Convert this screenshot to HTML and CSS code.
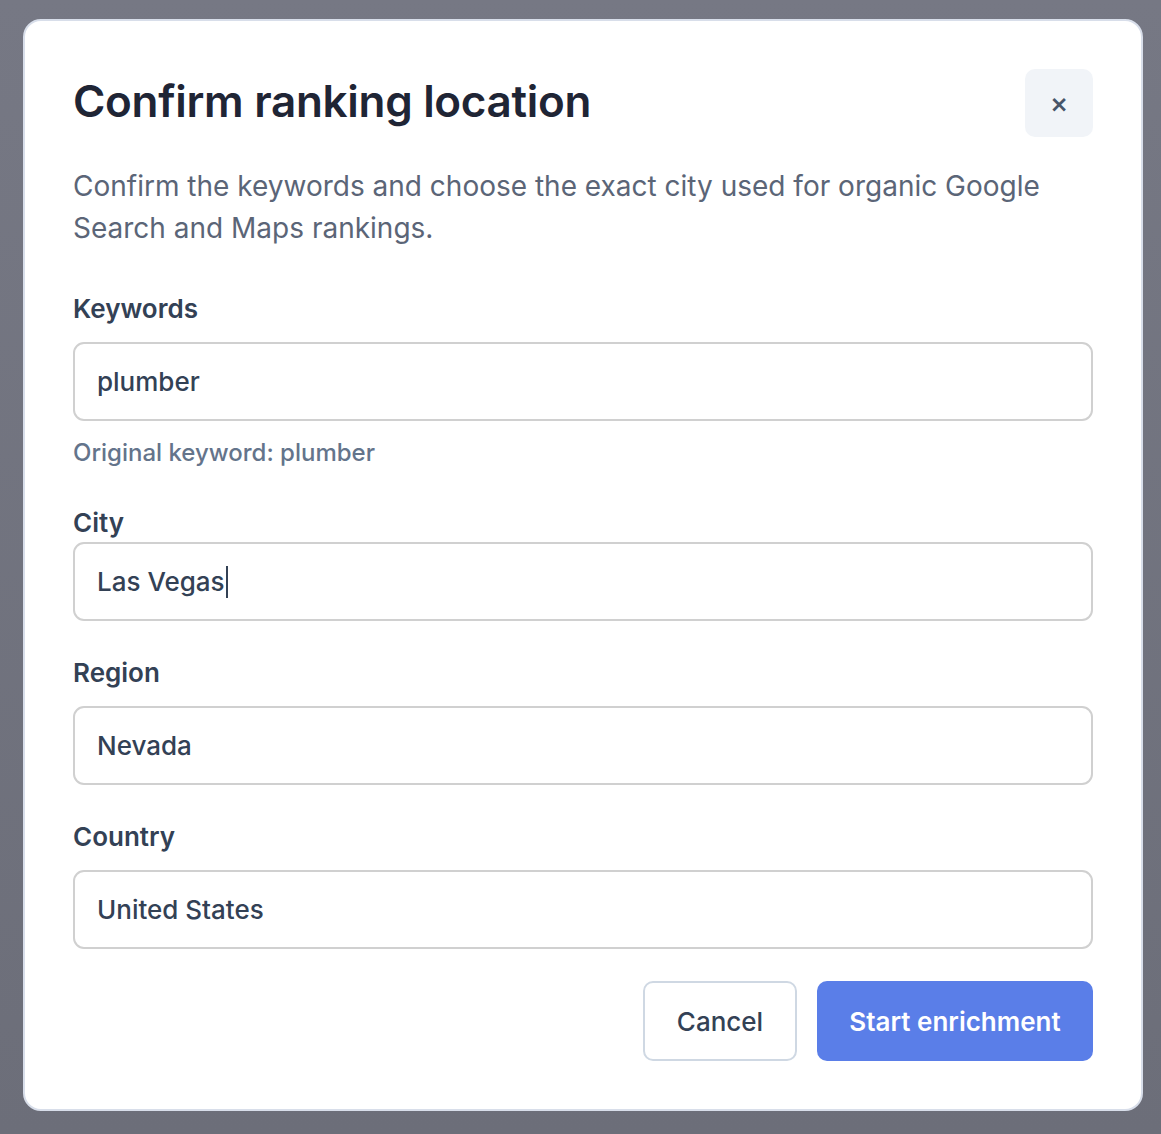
FILE: index.html
```html
<!DOCTYPE html>
<html lang="en">
<head>
  <meta charset="UTF-8" />
  <meta name="viewport" content="width=device-width, initial-scale=1.0"/>
  <title>Confirm ranking location</title>
  <link rel="stylesheet" href="styles.css">
</head>
<body>

  <div class="overlay">
    <div class="modal" role="dialog" aria-labelledby="modalTitle">
      <div class="modal-header">
        <h2 id="modalTitle">Confirm ranking location</h2>
        <button class="btn-close" type="button" aria-label="Close">&times;</button>
      </div>

      <p class="modal-text">
        Confirm the keywords and choose the exact city used for organic Google
        Search and Maps rankings.
      </p>

      <form class="fields">
        <!-- Keywords -->
        <div class="field field-keywords">
          <label for="keywords">Keywords</label>
          <input id="keywords" type="text" value="plumber" />
          <div class="hint">Original keyword: plumber</div>
        </div>

        <!-- City (autocomplete) -->
        <div class="field field-city">
          <label for="city">City</label>
          <div class="input-fake"><span>Las Vegas</span><span class="caret"></span></div>
        </div>

        <!-- Region -->
        <div class="field">
          <label for="region">Region</label>
          <input id="region" type="text" value="Nevada" />
        </div>

        <!-- Country -->
        <div class="field">
          <label for="country">Country</label>
          <input id="country" type="text" value="United States" />
        </div>

        <div class="actions">
          <button type="button" class="btn btn-cancel">Cancel</button>
          <button type="button" class="btn btn-primary">Start enrichment</button>
        </div>
      </form>
    </div>
  </div>

</body>
</html>
```

FILE: styles.css
```css
:root {
  --title: #1f2535;
  --text: #334155;
  --muted: #64748b;
  --line: #d0d0d0;
  --primary: #5a7ee8;
  --font-main: 'Inter', 'Noto Sans', sans-serif;
}

* {
  margin: 0;
  padding: 0;
  box-sizing: border-box;
}

body {
  font-family: var(--font-main);
  background: linear-gradient(to bottom, #767884, #6c6e79);
  color: var(--text);
  min-height: 100vh;
}

.overlay {
  padding: 19px 18px 23px 23px;
}

.modal {
  background: white;
  width: 1120px;
  border: 2px solid #d8deea;
  border-radius: 18px;
  padding: 48px;
}

.modal-header {
  display: flex;
  align-items: center;
  justify-content: space-between;
  height: 68px;
}

.modal-header h2 {
  font-size: 44px;
  font-weight: 600;
  color: var(--title);
  letter-spacing: -0.3px;
  line-height: 1.2;
  margin-top: -4px;
}

.btn-close {
  width: 68px;
  height: 68px;
  border: none;
  border-radius: 10px;
  background: #f1f4f8;
  color: #475569;
  font-family: var(--font-main);
  font-size: 28px;
  font-weight: 500;
  line-height: 1;
  cursor: pointer;
}

.modal-text {
  margin-top: 28px;
  font-size: 28px;
  line-height: 42px;
  color: #5b6577;
}

.fields {
  margin-top: 44px;
  display: flex;
  flex-direction: column;
  gap: 36px;
}

.field label {
  display: block;
  font-size: 26px;
  font-weight: 600;
  line-height: 32px;
  color: var(--text);
  margin-bottom: 17px;
}

.field-city label {
  margin-bottom: 3px;
}

.field input,
.input-fake {
  display: flex;
  align-items: center;
  width: 100%;
  height: 79px;
  border: 2px solid var(--line);
  border-radius: 11px;
  padding: 0 22px;
  font-family: var(--font-main);
  font-size: 26px;
  font-weight: 500;
  color: var(--text);
  background: white;
  outline: none;
}

.caret {
  display: inline-block;
  width: 2px;
  height: 32px;
  background: var(--text);
  margin-left: 1px;
}

.hint {
  margin-top: 16px;
  font-size: 24px;
  line-height: 32px;
  font-weight: 500;
  color: var(--muted);
}

.field-keywords {
  margin-bottom: 2px;
}

.actions {
  display: flex;
  justify-content: flex-end;
  gap: 20px;
  margin-top: -4px;
}

.btn {
  height: 80px;
  padding: 0 32px;
  border-radius: 10px;
  font-family: var(--font-main);
  font-size: 26px;
  font-weight: 500;
  cursor: pointer;
}

.btn-cancel {
  width: 154px;
  padding: 0;
  background: white;
  border: 2px solid #cfd8e3;
  color: var(--text);
}

.btn-primary {
  width: 276px;
  padding: 0;
  background: var(--primary);
  border: none;
  color: white;
  font-weight: 600;
}
```
